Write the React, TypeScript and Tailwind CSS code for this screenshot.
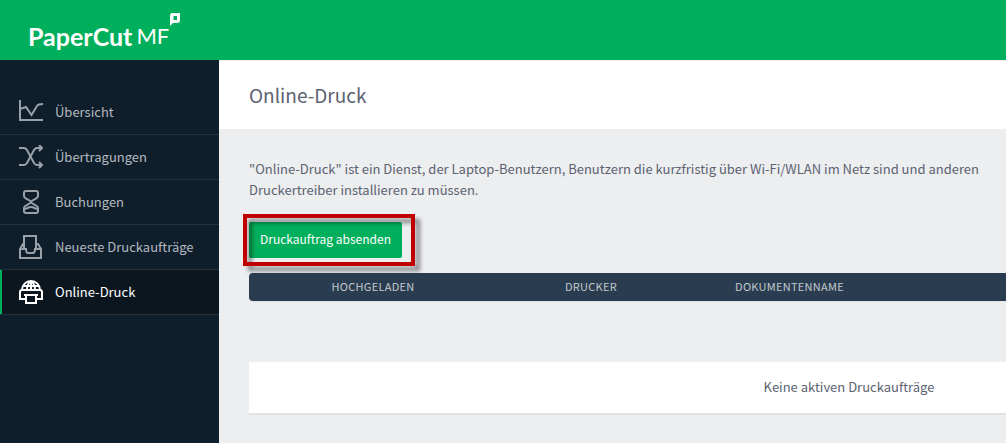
import type { ReactNode } from 'react';
import clsx from 'clsx';

interface NavItem {
  label: string;
  icon: ReactNode;
  active?: boolean;
}

const navItems: NavItem[] = [
  {
    label: 'Übersicht',
    icon: <path d="M1 0v20h23M1 9l6-2 5.5 8 5.500-9c1-1.500 3-2 6-2" />,
  },
  {
    label: 'Übertragungen',
    icon: (
      <>
        <path d="M0 3h5c1.500 0 2 .500 3 2l7 13c1 1.500 1.500 2 3 2h5" />
        <path d="M0 20h5c1.500 0 2-.500 3-2l7-13c1-1.500 1.500-2 3-2h5" />
        <path d="M20 0l3 3-3 3M20 17l3 3-3 3" />
      </>
    ),
  },
  {
    label: 'Buchungen',
    icon: (
      <>
        <path d="M7 1h10c1.500 0 2 1 2 2v3c0 3-7 4-7 6s7 3 7 6v3c0 1-1 2-2 2H7c-1 0-2-1-2-2v-3c0-3 7-4 7-6S5 9 5 6V3c0-1 .500-2 2-2z" />
        <path d="M5 19c3 0 4-2 7-2s4 2 7 2" />
      </>
    ),
  },
  {
    label: 'Neueste Druckaufträge',
    icon: (
      <>
        <path d="M5 14V1h12v13" />
        <path d="M5 9H4L1 14v9h21v-9l-3-5h-2" />
        <path d="M1 14h6c0 3 1 4 2 4h5c1 0 2-1 2-4h6" />
      </>
    ),
  },
  {
    label: 'Online-Druck',
    active: true,
    icon: (
      <>
        <path d="M3 10c0-5 4-9 9-9s9 4 9 9M4 6h16M12 1v9M12 1c-3 2-4 5-4 9M12 1c3 2 4 5 4 9" />
        <path d="M6 19H1v-7c0-1 1-2 2-2h18c1 0 2 1 2 2v7h-5" />
        <path d="M5 15h14M7 15v8h10v-8" />
      </>
    ),
  },
];

function Logo() {
  return (
    <a href="#" aria-label="PaperCut MF" className="flex items-start text-white">
      <span className="font-['Lato',sans-serif] text-[25px] leading-6 font-bold">PaperCut</span>
      <span className="ml-1 font-['Lato',sans-serif] text-[22px] leading-6 font-normal">MF</span>
      <svg viewBox="0 0 12 14" className="-mt-[11px] h-[14px] w-3" aria-hidden="true">
        <path
          fill="currentColor"
          fillRule="evenodd"
          d="M3 0h8v7c0 2-1 3-3 3H4l-3 3V3c0-2 1-3 2-3zM4.500 3v4H8V3z"
        />
      </svg>
    </a>
  );
}

function Sidebar() {
  return (
    <nav className="w-[219px] shrink-0 bg-[#0f1e2b] pt-[30px]">
      <ul>
        {navItems.map((item) => (
          <li key={item.label} className="border-b border-[#26333e]">
            <a
              href="#"
              aria-current={item.active ? 'page' : undefined}
              className={clsx(
                'flex h-11 items-center gap-3 border-l-2 pl-[17px]',
                item.active
                  ? 'border-[#00af5b] bg-[#0b161f] text-white'
                  : 'border-transparent text-[#b4bac0]',
              )}
            >
              <svg
                viewBox="0 0 24 24"
                className={clsx('size-6 shrink-0', !item.active && 'text-[#9aa2a9]')}
                fill="none"
                stroke="currentColor"
                strokeWidth="2"
                aria-hidden="true"
              >
                {item.icon}
              </svg>
              <span className="pb-0.5">{item.label}</span>
            </a>
          </li>
        ))}
      </ul>
    </nav>
  );
}

function JobsTable() {
  return (
    <table className="mt-[15px] w-full min-w-[1200px] table-fixed border-separate border-spacing-0">
      <thead>
        <tr className="h-7 bg-[#2a3d50] text-[11px] leading-4 tracking-wide text-[#c3c9ce] uppercase">
          <th className="w-[248px] rounded-l-sm pb-0.5 font-normal">Hochgeladen</th>
          <th className="w-[188px] pb-0.5 font-normal">Drucker</th>
          <th className="w-[209px] pb-0.5 font-normal">Dokumentenname</th>
          <th className="rounded-r-sm" />
        </tr>
      </thead>
      <tbody>
        <tr className="h-[61px]">
          <td colSpan={4} className="border-t border-[#e2e5e8]" />
        </tr>
        <tr className="h-[53px]">
          <td colSpan={4} className="border-b-2 border-[#e0e3e6] bg-white pb-0.5 text-center">
            Keine aktiven Druckaufträge
          </td>
        </tr>
      </tbody>
    </table>
  );
}

export default function App() {
  return (
    <div className="flex min-h-screen flex-col overflow-hidden bg-[#edeef0] font-['Noto_Sans_CJK_SC','Noto_Sans',sans-serif] text-[13px] leading-[21px] text-[#5b6270]">
      <header className="flex h-[60px] items-start bg-[#00af5b] pt-6 pl-7">
        <Logo />
      </header>
      <div className="flex grow">
        <Sidebar />
        <main className="min-w-0 grow overflow-hidden">
          <div className="border-t border-[#edeef0] bg-white px-[30px] py-5">
            <h1 className="text-[19px] leading-7">Online-Druck</h1>
          </div>
          <div className="px-[30px] pt-[29px]">
            <p className="whitespace-nowrap">
              "Online-Druck" ist ein Dienst, der Laptop-Benutzern, Benutzern die kurzfristig über Wi-Fi/WLAN im Netz sind und anderen
              <br />
              Druckertreiber installieren zu müssen.
            </p>
            <div className="relative mt-[22px] w-fit">
              <button type="button" className="block h-9 rounded-xs bg-[#00af5b] px-[11px] pb-0.5 text-xs text-white">
                Druckauftrag absenden
              </button>
              <div className="pointer-events-none absolute -top-2 -right-[13px] -bottom-2 -left-[6px] border-4 border-[#c00000] drop-shadow-[5px_5px_2px_rgba(0,0,0,0.45)]" />
            </div>
            <JobsTable />
          </div>
        </main>
      </div>
    </div>
  );
}
